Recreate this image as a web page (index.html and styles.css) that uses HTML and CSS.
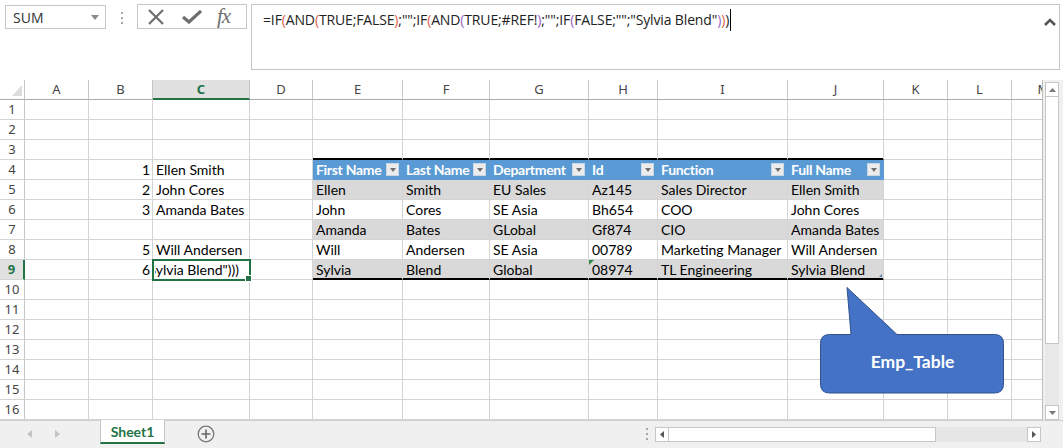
FILE: index.html
```html
<!DOCTYPE html>
<html lang="en">
<head>
  <meta charset="UTF-8">
  <title>Emp_Table - Excel</title>
  <link rel="stylesheet" href="styles.css">
</head>
<body>
  <div class="toolbar">
    <div class="namebox">
      <span>SUM</span>
      <svg class="caret" width="8" height="5" viewBox="0 0 8 5"><path d="M0 0h8L4 5z" fill="#8a8a8a"/></svg>
    </div>
    <div class="grip"><i></i><i></i><i></i></div>
    <div class="fxbtns">
      <svg width="18" height="16" viewBox="0 0 18 16"><path d="M2 1l14 14M16 1L2 15" stroke="#6e6e6e" stroke-width="2.2" fill="none"/></svg>
      <svg width="20" height="14" viewBox="0 0 20 14"><path d="M1 7l6 5L19 1" stroke="#6e6e6e" stroke-width="3.2" fill="none"/></svg>
      <span class="fx">fx</span>
    </div>
    <div class="formula">
      <span class="ftext">=IF<span class="p1">(</span>AND<span class="p1">(</span>TRUE;FALSE<span class="p1">)</span>;"";IF<span class="p1">(</span>AND<span class="p2">(</span>TRUE;#REF!<span class="p2">)</span>;"";IF<span class="p2">(</span>FALSE;"";"Sylvia Blend"<span class="p2">)</span><span class="p1">)</span>)</span><span class="cursor"></span>
      <svg class="collapse" width="12" height="8" viewBox="0 0 12 8"><path d="M1 7l5-5 5 5" stroke="#555" stroke-width="2.6" fill="none"/></svg>
    </div>
  </div>

  <div class="sheet">
    <div class="grid">
      <div class="r head">
        <div class="corner"><svg width="10" height="11" viewBox="0 0 10 11"><path d="M10 0v11H0z" fill="#dcdcdc"/></svg></div>
        <div>A</div><div>B</div><div class="sel-col">C</div><div>D</div><div>E</div><div>F</div><div>G</div><div>H</div><div>I</div><div>J</div><div>K</div><div>L</div><div>M</div>
      </div>
      <div class="r"><div class="rh">1</div><div></div><div></div><div></div><div></div><div></div><div></div><div></div><div></div><div></div><div></div><div></div><div></div><div></div></div>
      <div class="r"><div class="rh">2</div><div></div><div></div><div></div><div></div><div></div><div></div><div></div><div></div><div></div><div></div><div></div><div></div><div></div></div>
      <div class="r"><div class="rh">3</div><div></div><div></div><div></div><div></div><div class="tt"></div><div class="tt"></div><div class="tt"></div><div class="tt"></div><div class="tt"></div><div class="tt"></div><div></div><div></div><div></div></div>
      <div class="r">
        <div class="rh">4</div><div></div><div class="num">1</div><div>Ellen Smith</div><div></div>
        <div class="th"><span>First Name</span><i class="dd"></i></div>
        <div class="th"><span>Last Name</span><i class="dd"></i></div>
        <div class="th"><span>Department</span><i class="dd"></i></div>
        <div class="th"><span>Id</span><i class="dd"></i></div>
        <div class="th"><span>Function</span><i class="dd"></i></div>
        <div class="th"><span>Full Name</span><i class="dd"></i></div>
        <div></div><div></div><div></div>
      </div>
      <div class="r">
        <div class="rh">5</div><div></div><div class="num">2</div><div>John Cores</div><div></div>
        <div class="band">Ellen</div><div class="band">Smith</div><div class="band">EU Sales</div><div class="band">Az145</div><div class="band">Sales Director</div><div class="band">Ellen Smith</div>
        <div></div><div></div><div></div>
      </div>
      <div class="r">
        <div class="rh">6</div><div></div><div class="num">3</div><div>Amanda Bates</div><div></div>
        <div>John</div><div>Cores</div><div>SE Asia</div><div>Bh654</div><div>COO</div><div>John Cores</div>
        <div></div><div></div><div></div>
      </div>
      <div class="r">
        <div class="rh">7</div><div></div><div></div><div></div><div></div>
        <div class="band">Amanda</div><div class="band">Bates</div><div class="band">GLobal</div><div class="band">Gf874</div><div class="band">CIO</div><div class="band">Amanda Bates</div>
        <div></div><div></div><div></div>
      </div>
      <div class="r">
        <div class="rh">8</div><div></div><div class="num">5</div><div>Will Andersen</div><div></div>
        <div>Will</div><div>Andersen</div><div>SE Asia</div><div>00789</div><div>Marketing Manager</div><div>Will Andersen</div>
        <div></div><div></div><div></div>
      </div>
      <div class="r">
        <div class="rh sel-row">9</div><div></div><div class="num">6</div><div class="active"><span class="clip"><span>"Sylvia Blend")))</span></span></div><div></div>
        <div class="band tb">Sylvia</div><div class="band tb">Blend</div><div class="band tb">Global</div><div class="band tb err">08974</div><div class="band tb">TL Engineering</div><div class="band tb grab">Sylvia Blend</div>
        <div></div><div></div><div></div>
      </div>
      <div class="r"><div class="rh">10</div><div></div><div></div><div></div><div></div><div></div><div></div><div></div><div></div><div></div><div></div><div></div><div></div><div></div></div>
      <div class="r"><div class="rh">11</div><div></div><div></div><div></div><div></div><div></div><div></div><div></div><div></div><div></div><div></div><div></div><div></div><div></div></div>
      <div class="r"><div class="rh">12</div><div></div><div></div><div></div><div></div><div></div><div></div><div></div><div></div><div></div><div></div><div></div><div></div><div></div></div>
      <div class="r"><div class="rh">13</div><div></div><div></div><div></div><div></div><div></div><div></div><div></div><div></div><div></div><div></div><div></div><div></div><div></div></div>
      <div class="r"><div class="rh">14</div><div></div><div></div><div></div><div></div><div></div><div></div><div></div><div></div><div></div><div></div><div></div><div></div><div></div></div>
      <div class="r"><div class="rh">15</div><div></div><div></div><div></div><div></div><div></div><div></div><div></div><div></div><div></div><div></div><div></div><div></div><div></div></div>
      <div class="r"><div class="rh">16</div><div></div><div></div><div></div><div></div><div></div><div></div><div></div><div></div><div></div><div></div><div></div><div></div><div></div></div>
    </div>

    <div class="vscroll">
      <div class="sbtn"><svg width="7" height="4" viewBox="0 0 7 4"><path d="M0 4h7L3.5 0z" fill="#777"/></svg></div>
      <div class="vthumb"></div>
      <div class="vtrack"></div>
      <div class="sbtn"><svg width="7" height="4" viewBox="0 0 7 4"><path d="M0 0h7L3.5 4z" fill="#777"/></svg></div>
    </div>

    <div class="callout">
      <svg width="185" height="108" viewBox="0 0 185 108">
        <path d="M9.5 48.5H31L27 1.5 77 48.5H174.5Q183.5 48.5 183.5 57.5V98Q183.5 107 174.5 107H9.5Q0.5 107 0.5 98V57.5Q0.5 48.5 9.5 48.5Z" fill="#4472c4" stroke="#2f528f"/>
      </svg>
      <div class="callout-label">Emp_Table</div>
    </div>
  </div>

  <div class="tabbar">
    <div class="nav">
      <svg width="5" height="8" viewBox="0 0 5 8"><path d="M5 0v8L0 4z" fill="#c4c4c4"/></svg>
      <svg width="5" height="8" viewBox="0 0 5 8"><path d="M0 0v8l5-4z" fill="#c4c4c4"/></svg>
    </div>
    <div class="tab">Sheet1</div>
    <div class="add">
      <svg width="18" height="18" viewBox="0 0 18 18"><circle cx="9" cy="9" r="7.8" stroke="#777" stroke-width="1.3" fill="none"/><path d="M9 4.5v9M4.5 9h9" stroke="#666" stroke-width="1.6"/></svg>
    </div>
    <div class="hscroll">
      <div class="grip small"><i></i><i></i><i></i></div>
      <div class="sbtn"><svg width="4" height="7" viewBox="0 0 4 7"><path d="M4 0v7L0 3.5z" fill="#555"/></svg></div>
      <div class="hthumb"></div>
      <div class="htrack"></div>
      <div class="sbtn"><svg width="4" height="7" viewBox="0 0 4 7"><path d="M0 0v7l4-3.5z" fill="#555"/></svg></div>
    </div>
  </div>
</body>
</html>
```

FILE: styles.css
```css
body {
  margin: 0;
  width: 1063px;
  height: 448px;
  overflow: hidden;
  background-color: #ffffff;
  font-family: "Open Sans", "Noto Sans", sans-serif;
  color: #000;
}

/* formula bar */
.toolbar {
  display: flex;
  align-items: flex-start;
  height: 80px;
  padding-top: 4px;
  box-sizing: border-box;
}

.namebox {
  display: flex;
  align-items: center;
  justify-content: space-between;
  width: 101px;
  height: 24px;
  margin: 1px 0 0 5px;
  padding: 0 6px 0 7px;
  box-sizing: border-box;
  border: 1px solid #c6c6c6;
  font-size: 14px;
  color: #333;
}

.grip {
  display: flex;
  flex-direction: column;
  gap: 3px;
  width: 31px;
  padding-top: 8px;
  align-items: center;
}

.grip i {
  display: block;
  width: 2px;
  height: 2px;
  background-color: #a8a8a8;
}

.fxbtns {
  display: flex;
  align-items: center;
  gap: 17px;
  width: 110px;
  height: 25px;
  padding-left: 9px;
  box-sizing: border-box;
  border: 1px solid #c6c6c6;
}

.fx {
  font-family: "Liberation Serif", serif;
  font-style: italic;
  font-size: 21px;
  color: #6e6e6e;
  margin-left: -2px;
  letter-spacing: -1px;
}

.formula {
  display: flex;
  align-items: flex-start;
  width: 809px;
  height: 66px;
  margin-left: 4px;
  padding: 5px 0 0 11px;
  box-sizing: border-box;
  border: 1px solid #c6c6c6;
}

.ftext {
  font-size: 14px;
  line-height: 20px;
  letter-spacing: -0.14px;
  white-space: nowrap;
  color: #222;
}

.p1 { color: #e2604e; }
.p2 { color: #9b62c9; }

.cursor {
  display: inline-block;
  width: 1px;
  height: 22px;
  margin: -1px 0 0 1px;
  background-color: #000;
}

.collapse {
  margin: 8px 3px 0 auto;
}

/* sheet */
.sheet {
  position: relative;
  display: flex;
  height: 340px;
}

.grid {
  width: 1043px;
  height: 340px;
  overflow: hidden;
  box-sizing: border-box;
  border-right: 1px solid #bdbdbd;
}

.r {
  display: grid;
  grid-template-columns: 25px 64px 64px 97px 63px 90px 87px 99px 69px 130px 96px 64px 64px 64px;
  height: 20px;
}

.r > div {
  box-sizing: border-box;
  height: 20px;
  padding: 0 3px;
  border-right: 1px solid #d4d4d4;
  border-bottom: 1px solid #d4d4d4;
  font-family: "Lato", sans-serif;
  font-size: 14px;
  line-height: 19px;
  white-space: nowrap;
  overflow: hidden;
}

.r > .rh,
.head > div {
  padding: 0;
  text-align: center;
  font-family: "Noto Sans", sans-serif;
  font-size: 13px;
  color: #444;
  border-right-color: #c6c6c6;
}

.head > div {
  border-bottom-color: #ababab;
}

.head > .corner {
  display: flex;
  align-items: flex-end;
  justify-content: flex-end;
  padding: 0 2px 3px 0;
}

.r > .sel-col {
  background-color: #e1e1e1;
  color: #217346;
  font-weight: bold;
  border-bottom: 2px solid #217346;
}

.r > .sel-row {
  background-color: #e1e1e1;
  color: #217346;
  font-weight: bold;
  border-right: 2px solid #217346;
}

.r > .num {
  text-align: right;
  padding-right: 2px;
}

/* Emp_Table */
.r > .th {
  display: flex;
  align-items: center;
  justify-content: space-between;
  background-color: #5b9bd5;
  color: #fff;
  font-weight: bold;
  letter-spacing: -0.3px;
  border-right-color: #5b9bd5;
  border-bottom-color: #5b9bd5;
}

.dd {
  display: block;
  flex-shrink: 0;
  width: 13px;
  height: 13px;
  box-sizing: border-box;
  border: 1px solid #c9d6e4;
  background: #ececec;
  position: relative;
}

.dd::after {
  content: "";
  position: absolute;
  left: 3px;
  top: 4px;
  border-top: 4px solid #6f6f6f;
  border-left: 3px solid transparent;
  border-right: 3px solid transparent;
}

.r > .band {
  background-color: #d9d9d9;
}

.r > .tt,
.r > .tb {
  border-bottom-color: #000;
  box-shadow: inset 0 -1px 0 #000;
}

.r > .err,
.r > .grab {
  position: relative;
}

.err::before {
  content: "";
  position: absolute;
  left: 0;
  top: 0;
  border-top: 5px solid #2b8a3e;
  border-right: 5px solid transparent;
}

.grab::after {
  content: "";
  position: absolute;
  right: 1px;
  bottom: 2px;
  border-bottom: 3px solid #5a7fb5;
  border-left: 3px solid transparent;
}

.r > .active {
  position: relative;
  z-index: 1;
  padding: 0 10px 0 2px;
  outline: 2px solid #217346;
  outline-offset: -1px;
  overflow: visible;
}

.clip {
  display: flex;
  justify-content: flex-end;
  overflow: hidden;
}

.clip span {
  flex-shrink: 0;
}

.active::after {
  content: "";
  position: absolute;
  right: -3px;
  bottom: -3px;
  width: 5px;
  height: 5px;
  background-color: #217346;
  border: 1px solid #fff;
}

/* scrollbars */
.vscroll {
  display: flex;
  flex-direction: column;
  width: 20px;
  padding: 2px 4px 0 2px;
  box-sizing: border-box;
  background-color: #f0f0f0;
}

.sbtn {
  display: flex;
  align-items: center;
  justify-content: center;
  width: 14px;
  height: 15px;
  box-sizing: border-box;
  border: 1px solid #c6c6c6;
  background-color: #fff;
}

.vthumb {
  height: 247px;
  box-sizing: border-box;
  border: 1px solid #c6c6c6;
  border-top: none;
  background-color: #fff;
}

.vtrack {
  flex: 1;
  background-color: #e8e8e8;
}

.callout {
  position: absolute;
  left: 820px;
  top: 206px;
  width: 185px;
  height: 108px;
}

.callout svg {
  display: block;
}

.callout-label {
  position: absolute;
  left: 0;
  right: 0;
  top: 65px;
  text-align: center;
  font-family: "Lato", sans-serif;
  font-weight: bold;
  font-size: 17.5px;
  color: #fff;
}

/* sheet tabs */
.tabbar {
  display: flex;
  height: 28px;
  box-sizing: border-box;
  border-top: 1px solid #cfcfcf;
  background-color: #f0f0f0;
}

.nav {
  display: flex;
  gap: 23px;
  width: 100px;
  padding: 9px 0 0 27px;
  box-sizing: border-box;
}

.tab {
  width: 65px;
  height: 24px;
  box-sizing: border-box;
  margin-top: -1px;
  border-left: 1px solid #c6c6c6;
  border-right: 1px solid #c6c6c6;
  border-bottom: 2px solid #217346;
  background-color: #fff;
  text-align: center;
  font-family: "Lato", sans-serif;
  font-weight: bold;
  font-size: 14px;
  line-height: 23px;
  color: #217346;
}

.add {
  margin: 4px 0 0 32px;
}

.hscroll {
  display: flex;
  align-items: flex-start;
  margin: 6px 22px 0 auto;
}

.grip.small {
  width: 16px;
  padding-top: 1px;
}

.hthumb {
  width: 267px;
  height: 15px;
  box-sizing: border-box;
  border: 1px solid #c6c6c6;
  border-left: none;
  background-color: #fff;
}

.htrack {
  width: 91px;
  height: 15px;
  background-color: #e6e6e6;
}
```
